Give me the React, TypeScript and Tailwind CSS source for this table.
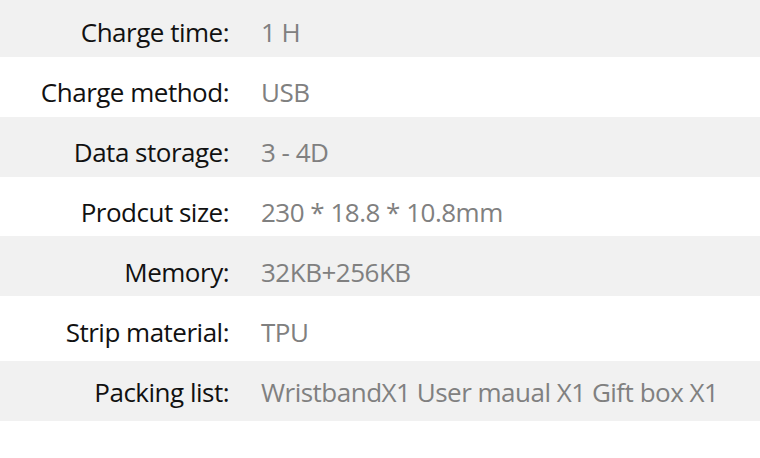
const ROWS = [
  { label: 'Charge time:', value: '1 H', cls: 'h-[57px] pt-[14px] bg-[#f1f1f1]' },
  { label: 'Charge method:', value: 'USB', cls: 'h-[60px] pt-[17px] bg-white' },
  { label: 'Data storage:', value: '3 - 4D', cls: 'h-[60px] pt-[17px] bg-[#f1f1f1]' },
  { label: 'Prodcut size:', value: '230 * 18.8 * 10.8mm', cls: 'h-[59px] pt-[17px] bg-white' },
  { label: 'Memory:', value: '32KB+256KB', cls: 'h-[60px] pt-[18px] bg-[#f1f1f1]' },
  { label: 'Strip material:', value: 'TPU', cls: 'h-[65px] pt-[18px] bg-white' },
  { label: 'Packing list:', value: 'WristbandX1 User maual X1 Gift box X1', cls: 'h-[60px] pt-[13px] bg-[#f1f1f1]' },
]

export default function App() {
  return (
    <div className="h-[458px] w-[760px] overflow-hidden bg-white font-['Open_Sans',sans-serif]">
      {ROWS.map((row) => (
        <div key={row.label} className={`flex items-start ${row.cls}`}>
          <div className="w-[229px] shrink-0 text-right text-[26px] leading-[36px] tracking-[-0.5px] whitespace-nowrap text-[#111]">
            {row.label}
          </div>
          <div className="pl-[32px] text-[26px] leading-[36px] tracking-[-0.5px] whitespace-nowrap text-[#808080]">
            {row.value}
          </div>
        </div>
      ))}
    </div>
  )
}
